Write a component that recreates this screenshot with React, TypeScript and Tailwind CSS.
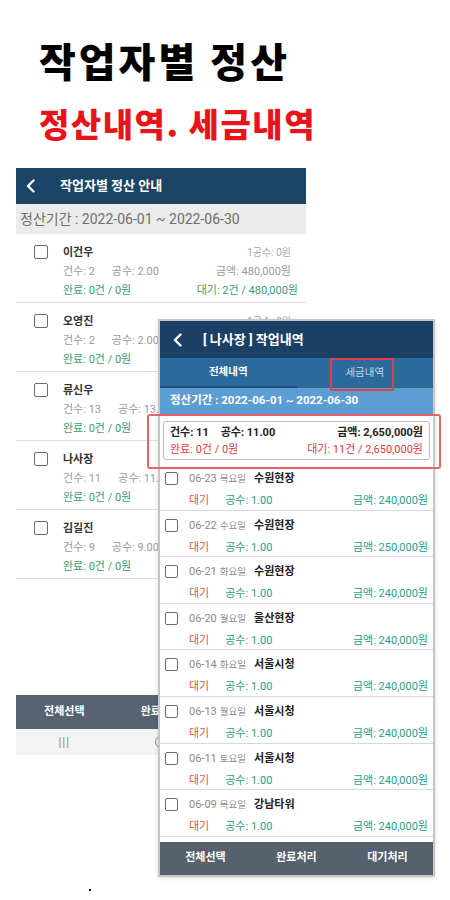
import React from "react";

const workers = [
    { name: "이건우", count: "2", gongsu: "2.00", amount: "480,000원", wait: "대기: 2건 / 480,000원" },
    { name: "오영진", count: "2", gongsu: "2.00", amount: "480,000원", wait: "대기: 2건 / 480,000원" },
    { name: "류신우", count: "13", gongsu: "13.00", amount: "3,120,000원", wait: "대기: 13건 / 3,120,000원" },
    { name: "나사장", count: "11", gongsu: "11.00", amount: "2,650,000원", wait: "대기: 11건 / 2,650,000원" },
    { name: "김길진", count: "9", gongsu: "9.00", amount: "2,160,000원", wait: "대기: 9건 / 2,160,000원" },
];

const jobs = [
    { date: "06-23", day: "목요일", site: "수원현장", amount: "240,000원" },
    { date: "06-22", day: "수요일", site: "수원현장", amount: "250,000원" },
    { date: "06-21", day: "화요일", site: "수원현장", amount: "240,000원" },
    { date: "06-20", day: "월요일", site: "울산현장", amount: "240,000원" },
    { date: "06-14", day: "화요일", site: "서울시청", amount: "240,000원" },
    { date: "06-13", day: "월요일", site: "서울시청", amount: "240,000원" },
    { date: "06-11", day: "토요일", site: "서울시청", amount: "240,000원" },
    { date: "06-09", day: "목요일", site: "강남타워", amount: "240,000원" },
];

function Chevron() {
    return (
        <svg width="9" height="14" viewBox="0 0 9 14" fill="none">
            <path d="M7.5 1.5 L2 7 L7.5 12.5" stroke="white" strokeWidth="2.4" strokeLinecap="round" strokeLinejoin="round" />
        </svg>
    );
}

function CheckBox({ size = 14 }: { size?: number }) {
    return (
        <div
            className="shrink-0 rounded-[2px] border-[1.5px] border-[#6b6b6b] bg-white"
            style={{ width: size, height: size }}
        />
    );
}

export default function App() {
    return (
        <div className="w-[450px] h-[900px] bg-white overflow-hidden font-['Roboto','Noto_Sans_CJK_KR',sans-serif]">
            {/* Headline */}
            <div className="pt-[40px] pl-[39px] font-['Noto_Sans_CJK_KR',sans-serif]">
                <h1 className="text-[40px] leading-none font-black text-black tracking-[3px]">작업자별 정산</h1>
                <h2 className="mt-[27px] text-[33px] leading-none font-black text-[#e8141c] tracking-[1.5px]">정산내역. 세금내역</h2>
            </div>

            <div className="relative mt-[28px]">
                {/* Back screen: worker list */}
                <div className="ml-[16px] w-[290px] bg-white">
                    <div className="h-[36px] bg-[#1b4566] flex items-center pl-[10px]">
                        <Chevron />
                        <span className="ml-[25px] text-[13px] font-bold text-white">작업자별 정산 안내</span>
                    </div>
                    <div className="h-[30px] bg-[#ebebeb] flex items-center pl-[4px] text-[14px] text-[#6f6f6f]">
                        정산기간 : 2022-06-01 ~ 2022-06-30
                    </div>

                    {workers.map((w, i) => (
                        <div key={w.name} className="h-[69px] border-b border-[#dcdcf0] flex pl-[18px] pr-[8px]">
                            <div className="pt-[11px]">
                                <CheckBox />
                            </div>
                            <div className="flex-1 pl-[15px] pt-[9px] text-[11px] leading-[19px]">
                                <div className="flex justify-between">
                                    <span className="font-bold text-[#333]">{w.name}</span>
                                    {i < 2 && <span className="mr-[7px] text-[10px] text-[#a8a8a8]">1공수: 0원</span>}
                                </div>
                                <div className="flex justify-between text-[#9a9a9a]">
                                    <span>
                                        건수: {w.count}
                                        <span className="ml-[17px]">공수: {w.gongsu}</span>
                                    </span>
                                    <span className="mr-[7px]">금액: {w.amount}</span>
                                </div>
                                <div className="flex justify-between text-[#3b9a74]">
                                    <span>완료: 0건 / 0원</span>
                                    <span>{w.wait}</span>
                                </div>
                            </div>
                        </div>
                    ))}

                    <div className="h-[116px]" />
                    <div className="h-[34px] bg-[#566370] grid grid-cols-3 items-center text-center text-[11px] font-bold text-white">
                        <span>전체선택</span>
                        <span>완료처리</span>
                        <span>대기처리</span>
                    </div>
                    <div className="h-[26px] bg-[#f3f3f3] grid grid-cols-3 items-center text-center text-[#8a8a8a]">
                        <span className="text-[12px] tracking-[1px]">|||</span>
                        <span className="flex justify-center">
                            <span className="w-[12px] h-[12px] rounded-full border-[1.5px] border-[#8a8a8a]" />
                        </span>
                        <span className="text-[13px]">&lt;</span>
                    </div>
                </div>

                {/* Front screen: job details */}
                <div className="absolute left-[158px] top-[151px] w-[277px] border-2 border-[#c6c6c6] bg-white shadow-[0_1px_4px_rgba(0,0,0,0.15)]">
                    <div className="h-[37px] bg-[#1a4165] flex items-center pl-[13px]">
                        <Chevron />
                        <span className="ml-[21px] text-[13px] font-bold text-white">[ 나사장 ] 작업내역</span>
                    </div>
                    <div className="h-[30px] bg-[#2c6a9c] flex text-[10.5px]">
                        <div className="w-1/2 flex items-center justify-center font-bold text-white border-b-2 border-[#1d4f7c]">전체내역</div>
                        <div className="w-1/2 flex items-center justify-center text-[#c7d6e4]">세금내역</div>
                    </div>
                    <div className="h-[26px] bg-[#5c9dd3] flex items-center pl-[10px] text-[11.5px] font-bold text-white">
                        정산기간 : 2022-06-01 ~ 2022-06-30
                    </div>
                    <div className="h-[50px] px-[3px] pt-[7px]">
                        <div className="h-[39px] border border-[#bdbdbd] rounded-[3px] px-[6px] pt-[2px] text-[11px] leading-[17px]">
                            <div className="flex justify-between font-bold text-[#222]">
                                <span>
                                    건수: 11
                                    <span className="ml-[12px]">공수: 11.00</span>
                                </span>
                                <span>금액: 2,650,000원</span>
                            </div>
                            <div className="flex justify-between text-[#e23a3a]">
                                <span>완료: 0건 / 0원</span>
                                <span>대기: 11건 / 2,650,000원</span>
                            </div>
                        </div>
                    </div>

                    {jobs.map((j) => (
                        <div key={j.date} className="h-[46.6px] border-b border-[#d6d6e6] flex pl-[5px] pr-[5px]">
                            <div className="pt-[8px]">
                                <CheckBox size={13} />
                            </div>
                            <div className="flex-1 pl-[11px] pt-[5px] text-[11px] leading-[20px]">
                                <div className="flex items-baseline">
                                    <span className="text-[#8a8a8a]">{j.date}</span>
                                    <span className="ml-[3px] text-[9.5px] text-[#8a8a8a]">{j.day}</span>
                                    <span className="ml-[8px] font-bold text-[#222]">{j.site}</span>
                                </div>
                                <div className="flex justify-between mt-[2px]">
                                    <span>
                                        <span className="text-[#e0533f]">대기</span>
                                        <span className="ml-[16px] text-[#2e9c86]">공수: 1.00</span>
                                    </span>
                                    <span className="text-[#2e9c86]">금액: {j.amount}</span>
                                </div>
                            </div>
                        </div>
                    ))}

                    <div className="h-[5px]" />
                    <div className="h-[33px] bg-[#55616d] grid grid-cols-3 items-center text-center text-[11px] font-bold text-white">
                        <span>전체선택</span>
                        <span>완료처리</span>
                        <span>대기처리</span>
                    </div>
                </div>

                {/* Red highlights */}
                <div className="absolute left-[330px] top-[190px] w-[64px] h-[33px] border-2 border-[#e0404a]" />
                <div className="absolute left-[147px] top-[246px] w-[294px] h-[55px] border-2 border-[#e8626a] rounded-[3px]" />
            </div>

            <div className="mt-[134px] ml-[89px] w-[2px] h-[2px] bg-black" />
        </div>
    );
}
